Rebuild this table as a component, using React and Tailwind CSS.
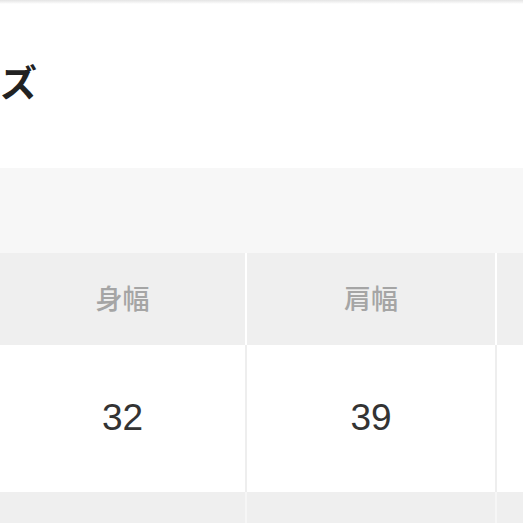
export default function App() {
  const font = { fontFamily: '"Liberation Sans", "Noto Sans CJK JP", sans-serif' };
  const cjk = { fontFamily: '"Noto Sans CJK JP", sans-serif' };
  return (
    <div className="w-[523px] h-[523px] overflow-hidden bg-white" style={font}>
      <div className="h-[4px] bg-gradient-to-b from-[#e4e4e4] to-white" />
      <div className="h-[164px] flex items-start pt-[59px] overflow-hidden">
        <h2
          className="-ml-[73px] text-[37px] leading-[37px] font-bold text-[#222] whitespace-nowrap"
          style={cjk}
        >
          サイズ
        </h2>
      </div>
      <div className="h-[85px] bg-[#f7f7f7]" />
      <div className="flex gap-[2px] bg-white h-[92px]">
        <div className="w-[245px] shrink-0 bg-[#efefef] flex items-center justify-center pb-[2px] text-[27px] font-medium text-[#a5a5a5]" style={cjk}>身幅</div>
        <div className="w-[248px] shrink-0 bg-[#efefef] flex items-center justify-center pb-[2px] text-[27px] font-medium text-[#a5a5a5]" style={cjk}>肩幅</div>
        <div className="flex-1 bg-[#efefef]" />
      </div>
      <div className="flex gap-[2px] bg-[#eeeeee] h-[147px]">
        <div className="w-[245px] shrink-0 bg-white flex items-center justify-center pb-[2px] text-[37px] text-[#333]">32</div>
        <div className="w-[248px] shrink-0 bg-white flex items-center justify-center pb-[2px] text-[37px] text-[#333]">39</div>
        <div className="flex-1 bg-white" />
      </div>
      <div className="flex gap-[2px] bg-[#f6f6f6] h-[40px]">
        <div className="w-[245px] shrink-0 bg-[#efefef]" />
        <div className="w-[248px] shrink-0 bg-[#efefef]" />
        <div className="flex-1 bg-[#efefef]" />
      </div>
    </div>
  );
}
